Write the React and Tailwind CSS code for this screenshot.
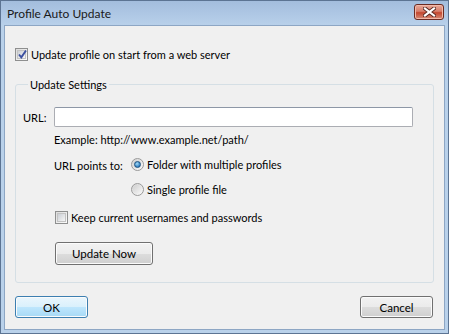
import React from "react";

const font = { fontFamily: 'Lato, "Noto Sans", sans-serif' };

// Win7-style checkbox
const CheckBox = ({ checked }) => (
  <span className="relative w-[13px] h-[13px] shrink-0 border border-[#8e8f8f] bg-[linear-gradient(135deg,#dcdcdc,#fcfcfc)] flex items-center justify-center">
    <span className="w-[9px] h-[9px] border border-[#c3c3c3] bg-[linear-gradient(135deg,#cbcfd5,#f6f6f6)] flex items-center justify-center">
      {checked && (
        <svg width="11" height="11" viewBox="0 0 11 11" className="absolute left-[1px] top-[0px]">
          <path d="M2 5.5 L4.3 8.3 L9 1.5" fill="none" stroke="#3b50a0" strokeWidth="1.9" />
        </svg>
      )}
    </span>
  </span>
);

const Radio = ({ checked }) => (
  <span className="w-[13px] h-[13px] shrink-0 rounded-full border border-[#9a9a9a] bg-[linear-gradient(135deg,#d4d4d4,#fbfbfb)] flex items-center justify-center">
    <span className="w-[9px] h-[9px] rounded-full bg-[linear-gradient(135deg,#cfcfcf,#f7f7f7)] flex items-center justify-center">
      {checked && (
        <span className="w-[7px] h-[7px] rounded-full border border-[#1c5180] bg-[radial-gradient(circle_at_40%_35%,#a6dcf7,#2f7fc1_70%)]" />
      )}
    </span>
  </span>
);

const Button = ({ children, className = "", primary }) => (
  <button
    className={`rounded-[3px] border text-[11.5px] text-black flex items-center justify-center shadow-[inset_0_0_0_1px_#fbfbfb] ${
      primary
        ? "border-[#3c7fb1] bg-[linear-gradient(#eaf6fd_0%,#d9f0fc_50%,#bee6fd_50%,#a7d9f5_100%)] shadow-[inset_0_0_0_1px_#f3fbff]"
        : "border-[#707070] bg-[linear-gradient(#f2f2f2_0%,#ebebeb_50%,#dddddd_50%,#cfcfcf_100%)]"
    } ${className}`}
  >
    {children}
  </button>
);

export default function App() {
  return (
    <div style={font} className="w-[449px] h-[334px] bg-[#b9d1ea] border border-[#5c7493] flex flex-col text-[11px] leading-[15px] text-black whitespace-nowrap">
      {/* Title bar */}
      <div className="h-[24px] shrink-0 flex items-center justify-between pl-[6px] pr-[4px] bg-[linear-gradient(#a3bddd,#b8d0ea)]">
        <span className="text-[12px] text-[#1a1a1a] mt-[1px]">Profile Auto Update</span>
        <div className="w-[30px] h-[16px] mt-[-2px] rounded-[3px] border border-[#6b2b22] bg-[linear-gradient(#e9a99a_0%,#d67e6b_45%,#c4472f_55%,#d58c78_100%)] shadow-[inset_0_0_0_1px_#f1b9a9] flex items-center justify-center">
          <svg width="13" height="10" viewBox="0 0 13 10">
            <path d="M2 1.5 L11 8.5 M11 1.5 L2 8.5" stroke="#5a2a22" strokeWidth="4" strokeLinecap="square" />
            <path d="M2 1.5 L11 8.5 M11 1.5 L2 8.5" stroke="#ffffff" strokeWidth="2.2" strokeLinecap="square" />
          </svg>
        </div>
      </div>

      {/* Client area */}
      <div className="flex-1 mx-[3px] mb-[3px] border border-[#8da6c4] bg-[#f0f0f0] px-[10px] flex flex-col">
        <label className="mt-[21px] flex items-center gap-[3px]">
          <CheckBox checked />
          <span>Update profile on start from a web server</span>
        </label>

        <fieldset className="mt-[15px] border border-[#d5dfe5] rounded-[3px] pl-[7px] pr-[20px] pb-[17px]">
          <legend className="ml-[5px] px-[2px]">Update Settings</legend>

          <div className="mt-[15px] flex items-center">
            <span className="w-[31px]">URL:</span>
            <input className="flex-1 h-[20px] border border-[#abadb3] border-t-[#8d97a6] bg-white rounded-[2px] outline-none" />
          </div>

          <div className="ml-[31px] mt-[5px]">Example: http://www.example.net/path/</div>

          <div className="ml-[31px] mt-[10px] flex">
            <span className="w-[77px] pt-[1px]">URL points to:</span>
            <div className="flex flex-col gap-[10px]">
              <label className="flex items-center gap-[3px]">
                <Radio checked />
                <span>Folder with multiple profiles</span>
              </label>
              <label className="flex items-center gap-[3px]">
                <Radio />
                <span>Single profile file</span>
              </label>
            </div>
          </div>

          <label className="ml-[32px] mt-[13px] flex items-center gap-[3px]">
            <CheckBox />
            <span>Keep current usernames and passwords</span>
          </label>

          <Button className="ml-[32px] mt-[17px] w-[98px] h-[23px]">Update Now</Button>
        </fieldset>

        <div className="mt-[13px] flex justify-between">
          <Button primary className="w-[73px] h-[22px]">OK</Button>
          <Button className="w-[73px] h-[22px] mr-[1px]">Cancel</Button>
        </div>
      </div>
    </div>
  );
}
